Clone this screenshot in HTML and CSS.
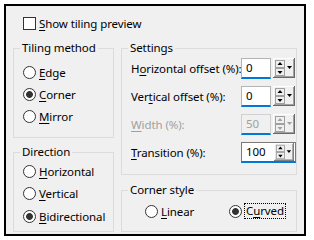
FILE: index.html
```html
<!DOCTYPE html>
<html lang="en">
<head>
  <meta charset="UTF-8">
  <title>Tiling</title>
  <link rel="stylesheet" href="styles.css">
</head>
<body>
  <div class="dialog">
    <div class="check-row">
      <span class="checkbox"></span>
      <span><u>S</u>how tiling preview</span>
    </div>

    <div class="columns">
      <div class="col col-left">
        <fieldset class="group tiling">
          <legend>Tiling method</legend>
          <div class="radio-list">
            <div class="radio"><span class="circle"></span><span><u>E</u>dge</span></div>
            <div class="radio"><span class="circle on"></span><span><u>C</u>orner</span></div>
            <div class="radio"><span class="circle"></span><span><u>M</u>irror</span></div>
          </div>
        </fieldset>
        <fieldset class="group direction">
          <legend>Direction</legend>
          <div class="radio-list">
            <div class="radio"><span class="circle"></span><span><u>H</u>orizontal</span></div>
            <div class="radio"><span class="circle"></span><span><u>V</u>ertical</span></div>
            <div class="radio"><span class="circle on"></span><span><u>B</u>idirectional</span></div>
          </div>
        </fieldset>
      </div>

      <div class="col col-right">
        <fieldset class="group settings">
          <legend>Settings</legend>
          <div class="field-row">
            <span class="label">H<u>o</u>rizontal offset (%):</span>
            <div class="field">
              <span class="input">0</span>
              <svg class="spin" width="22" height="20" viewBox="0 0 22 20">
                <use href="#spinner"/>
              </svg>
            </div>
          </div>
          <div class="field-row">
            <span class="label">Ver<u>t</u>ical offset (%):</span>
            <div class="field">
              <span class="input">0</span>
              <svg class="spin" width="22" height="20" viewBox="0 0 22 20">
                <use href="#spinner"/>
              </svg>
            </div>
          </div>
          <div class="field-row disabled">
            <span class="label"><u>W</u>idth (%):</span>
            <div class="field">
              <span class="input">50</span>
              <svg class="spin" width="22" height="20" viewBox="0 0 22 20">
                <use href="#spinner"/>
              </svg>
            </div>
          </div>
          <div class="field-row">
            <span class="label"><u>T</u>ransition (%):</span>
            <div class="field focused">
              <span class="input">100</span>
              <svg class="spin" width="22" height="20" viewBox="0 0 22 20">
                <use href="#spinner"/>
              </svg>
            </div>
          </div>
        </fieldset>
        <fieldset class="group corner">
          <legend>Corner style</legend>
          <div class="radio-row">
            <div class="radio linear"><span class="circle"></span><span><u>L</u>inear</span></div>
            <div class="radio"><span class="circle on"></span><span class="focus">C<u>u</u>rved</span></div>
          </div>
        </fieldset>
      </div>
    </div>
  </div>

  <svg width="0" height="0" class="defs">
    <defs>
      <g id="spinner">
        <rect x="0" y="0" width="22" height="20" fill="#f0f0f0"/>
        <path d="M0 0.5H21M0.5 0V19" stroke="#fff"/>
        <path d="M21.5 0V20M0 19.5H22" stroke="#696969"/>
        <path d="M20.5 1V19M1 18.5H21" stroke="#a0a0a0"/>
        <rect x="2.5" y="2.5" width="9" height="7" fill="#f0f0f0" stroke="#a0a0a0"/>
        <rect x="2.5" y="10.5" width="9" height="7" fill="#f0f0f0" stroke="#a0a0a0"/>
        <path d="M7 4L9.5 7H4.5Z" fill="currentColor"/>
        <path d="M7 16L9.5 13H4.5Z" fill="currentColor"/>
        <path d="M14 8H19L16.5 11Z" fill="currentColor"/>
      </g>
    </defs>
  </svg>
</body>
</html>
```

FILE: styles.css
```css
body {
  margin: 0;
  background: #fff;
  font-family: "Noto Sans", sans-serif;
  font-size: 11.5px;
  letter-spacing: -0.1px;
  color: #000;
}
u {
  text-decoration-thickness: 1px;
  text-underline-offset: 2px;
}
.defs {
  position: absolute;
}
.dialog {
  margin: 4px;
  width: 302px;
  height: 232px;
  box-sizing: border-box;
  border: 2px solid #000;
  background: #f0f0f0;
  padding: 8px 7px 2px 7px;
}
.check-row {
  display: flex;
  align-items: center;
  height: 18px;
  padding-left: 10px;
  margin-bottom: 8px;
}
.checkbox {
  width: 13px;
  height: 13px;
  box-sizing: border-box;
  border: 1px solid #333;
  background: #fff;
  margin-right: 3px;
}
.columns {
  display: flex;
  gap: 7px;
}
.col-left {
  width: 101px;
}
.col-right {
  width: 176px;
}
.group {
  margin: 0;
  padding: 0;
  border: 1px solid #dcdcdc;
  box-sizing: border-box;
  min-width: 0;
}
.group legend {
  margin-left: 6px;
  padding: 0 2px;
  line-height: 16px;
}
.tiling {
  height: 98px;
}
.direction {
  height: 88px;
  margin-top: 6px;
}
.settings {
  height: 135px;
}
.corner {
  height: 50px;
  margin-top: 7px;
}
.radio-list {
  display: flex;
  flex-direction: column;
  padding: 5px 0 0 9px;
}
.direction .radio-list {
  padding-top: 0;
}
.radio {
  display: flex;
  align-items: center;
  height: 22px;
}
.direction .radio {
  height: 22.5px;
}
.circle {
  width: 13px;
  height: 13px;
  box-sizing: border-box;
  border: 1px solid #333;
  border-radius: 50%;
  background: #fff;
  margin-right: 3px;
}
.circle.on {
  background: radial-gradient(circle, #333 3px, #fff 3.8px);
}
.field-row {
  display: flex;
  align-items: center;
  height: 20px;
  margin-top: 8px;
  padding-left: 9px;
}
.settings .field-row:first-of-type {
  margin-top: 2px;
}
.label {
  width: 110px;
  white-space: nowrap;
}
.field {
  display: flex;
  align-items: flex-start;
  gap: 2px;
  height: 21px;
  color: #000;
}
.input {
  width: 30px;
  height: 21px;
  box-sizing: border-box;
  border: 1px solid #b4b4b4;
  border-bottom: 2px solid #0078d7;
  background: #fff;
  padding-left: 4px;
  line-height: 18px;
}
.spin {
  display: block;
}
.field.focused {
  width: 55px;
  box-sizing: border-box;
  border: 1px solid #7a7a7a;
  border-bottom: 2px solid #0078d7;
  background: #fff;
}
.field.focused .input {
  border: none;
  height: 18px;
  width: 29px;
  line-height: 18px;
}
.field.focused .spin {
  height: 18px;
}
.disabled .label,
.disabled .input,
.disabled .field {
  color: #a0a0a0;
}
.disabled .input {
  border-color: #d0d0d0;
  border-bottom-color: #0078d7;
  background: #f0f0f0;
}
.radio-row {
  display: flex;
  align-items: center;
  padding: 2px 0 0 23px;
}
.radio.linear {
  width: 84px;
}
.focus {
  outline: 1px dotted #000;
  outline-offset: 0;
  padding: 0 1px;
  line-height: 14px;
}
```
